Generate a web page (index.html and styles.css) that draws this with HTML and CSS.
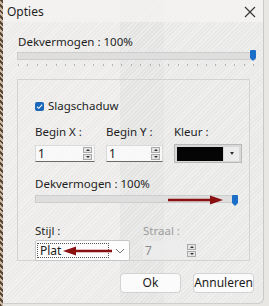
FILE: index.html
```html
<!DOCTYPE html>
<html>
<head>
<meta charset="utf-8">
<link rel="stylesheet" href="styles.css">
</head>
<body>
<div class="edge"></div>
<div class="window">
  <div class="titlebar">
    <span class="title">Opties</span>
    <svg class="close" width="12" height="12" viewBox="0 0 12 12"><path d="M1 1 L11 11 M11 1 L1 11" stroke="#333" stroke-width="1.1" fill="none"/></svg>
  </div>
  <div class="content">
    <div class="label top-label">Dekvermogen : 100%</div>
    <div class="slider wide">
      <div class="track"></div>
      <div class="thumb"></div>
    </div>
    <div class="ticks wide-ticks"></div>

    <div class="group">
      <div class="check-row">
        <span class="checkbox"><svg width="9" height="9" viewBox="0 0 9 9"><path d="M2 4.6 L3.8 6.3 L7.2 2.6" stroke="#fff" stroke-width="1.1" fill="none"/></svg></span>
        <span class="label">Slagschaduw</span>
      </div>
      <div class="fields">
        <div class="field">
          <div class="label">Begin X :</div>
          <div class="input spin-input"><span class="val">1</span><span class="spin"><span class="up"></span><span class="down"></span></span></div>
        </div>
        <div class="field">
          <div class="label">Begin Y :</div>
          <div class="input spin-input"><span class="val">1</span><span class="spin"><span class="up"></span><span class="down"></span></span></div>
        </div>
        <div class="field">
          <div class="label">Kleur :</div>
          <div class="color-pick"><span class="swatch"></span><span class="drop"><span class="tri"></span></span></div>
        </div>
      </div>
      <div class="label mid-label">Dekvermogen : 100%</div>
      <div class="slider narrow">
        <div class="track"></div>
        <svg class="arrow-right" width="56" height="10" viewBox="0 0 56 10"><path d="M0 5 H44" stroke="#8b1010" stroke-width="2.4"/><path d="M42 0.5 L55 5 L42 9.5 Z" fill="#8b1010"/></svg>
        <div class="thumb"></div>
      </div>
      <div class="ticks narrow-ticks"></div>

      <div class="fields bottom-fields">
        <div class="field">
          <div class="label">Stijl :</div>
          <div class="select">
            <span class="focus">Plat
              <svg class="arrow-left" width="50" height="10" viewBox="0 0 50 10"><path d="M11 5 H49" stroke="#8b1010" stroke-width="2.4"/><path d="M13 0.5 L0 5 L13 9.5 Z" fill="#8b1010"/></svg>
            </span>
            <svg class="chev" width="10" height="6" viewBox="0 0 10 6"><path d="M1 1 L5 5 L9 1" stroke="#777" stroke-width="1" fill="none"/></svg>
          </div>
        </div>
        <div class="field">
          <div class="label disabled">Straal :</div>
          <div class="input spin-input dis"><span class="val">7</span><span class="spin"><span class="up"></span><span class="down"></span></span></div>
        </div>
      </div>
    </div>

    <div class="buttons">
      <div class="btn ok">Ok</div>
      <div class="btn">Annuleren</div>
    </div>
  </div>
</div>
</body>
</html>
```

FILE: styles.css
```css
html, body {
  margin: 0;
  padding: 0;
}
body {
  width: 269px;
  height: 306px;
  overflow: hidden;
  display: flex;
  background: #e9e7e4;
  font-family: "Noto Sans", "Open Sans", sans-serif;
  color: #1a1a1a;
}
.edge {
  width: 3px;
  height: 306px;
  background: repeating-linear-gradient(45deg, #5a4634 0 2px, #c9b8a2 2px 4px);
  flex: none;
}
.window {
  width: 260px;
  height: 303px;
  flex: none;
  border-right: 1px solid #c9c9c9;
  border-bottom: 1px solid #cfcfcf;
  border-bottom-right-radius: 6px;
  background:
    repeating-linear-gradient(135deg, rgba(255,255,255,0.35) 0 1px, rgba(255,255,255,0) 1px 3px),
    linear-gradient(90deg, #ecebe9 0 45%, #e4e4e3 45% 62%, #e9e9e8 62% 100%);
  display: flex;
  flex-direction: column;
}
.titlebar {
  height: 22px;
  display: flex;
  align-items: center;
  justify-content: space-between;
  padding: 0 7px 0 4px;
  background: rgba(245,244,242,0.7);
}
.title {
  font-size: 12px;
  color: #1f1f1f;
}
.close {
  margin-top: 1px;
}
.content {
  padding: 0 9px 0 14px;
  display: flex;
  flex-direction: column;
}
.label {
  font-size: 11.5px;
  line-height: 14px;
  color: #1e1e1e;
  white-space: nowrap;
}
.top-label {
  margin-top: 13px;
  margin-left: 1px;
}
.slider {
  position: relative;
  height: 11px;
  display: flex;
  align-items: center;
}
.slider.wide {
  margin-top: 1px;
  width: 239px;
}
.track {
  flex: 1;
  height: 6px;
  background: #dedede;
  border: 1px solid #cdcdcd;
}
.thumb {
  position: absolute;
  right: 0;
  top: 0;
  width: 6px;
  height: 8px;
  background: #1b6fc8;
  border-radius: 1px 1px 0 0;
}
.thumb::after {
  content: "";
  position: absolute;
  left: 0;
  top: 8px;
  border-left: 3px solid transparent;
  border-right: 3px solid transparent;
  border-top: 3px solid #1b6fc8;
}
.ticks {
  height: 2px;
  margin-top: 3px;
  background: repeating-linear-gradient(90deg, #b4b4b4 0 1px, transparent 1px 9.4px);
}
.wide-ticks {
  width: 236px;
  margin-left: 1px;
}
.group {
  margin-top: 13px;
  width: 214px;
  height: 180px;
  border: 1px solid #d3d3d3;
  padding: 0 0 0 17px;
  display: flex;
  flex-direction: column;
}
.check-row {
  margin-top: 19px;
  display: flex;
  align-items: center;
  gap: 4px;
}
.checkbox {
  width: 9px;
  height: 9px;
  background: #1a67b8;
  border-radius: 2px;
  display: flex;
}
.fields {
  margin-top: 12px;
  display: flex;
  gap: 11px;
}
.field {
  display: flex;
  flex-direction: column;
  gap: 6px;
}
.input {
  height: 15px;
  background: rgba(250,250,250,0.9);
  border: 1px solid #dadada;
  border-bottom: 1px solid #6a6a6a;
  display: flex;
  align-items: center;
  justify-content: space-between;
  font-size: 12px;
}
.spin-input {
  width: 58px;
}
.fields .field:nth-child(2) .spin-input {
  width: 55px;
}
.val {
  padding-left: 2px;
}
.spin {
  width: 9px;
  margin-right: 2px;
  display: flex;
  flex-direction: column;
  gap: 1px;
}
.spin span {
  height: 6px;
  background: #e4e4e4;
  border: 1px solid #aaa;
  box-sizing: border-box;
  position: relative;
}
.spin span::after {
  content: "";
  position: absolute;
  left: 2px;
  top: 1px;
  border-left: 2px solid transparent;
  border-right: 2px solid transparent;
}
.spin .up::after { border-bottom: 2px solid #333; }
.spin .down::after { border-top: 2px solid #333; }
.color-pick {
  width: 62px;
  height: 17px;
  border: 1px solid #b9b9b9;
  background: #d8d8d8;
  display: flex;
  align-items: center;
  padding: 0 2px;
  gap: 1px;
  margin-top: -1px;
}
.swatch {
  width: 46px;
  height: 14px;
  background: #050505;
}
.drop {
  flex: 1;
  height: 14px;
  background: #ececec;
  display: flex;
  align-items: center;
  justify-content: center;
}
.tri {
  border-left: 2px solid transparent;
  border-right: 2px solid transparent;
  border-top: 3px solid #333;
}
.mid-label {
  margin-top: 14px;
}
.slider.narrow {
  margin-top: 4px;
  width: 203px;
}
.arrow-right {
  position: absolute;
  left: 133px;
  top: 0;
}
.narrow-ticks {
  width: 198px;
  margin-left: 1px;
  background: repeating-linear-gradient(90deg, #b4b4b4 0 1px, transparent 1px 11.3px);
}
.bottom-fields {
  margin-top: 18px;
  gap: 13px;
}
.bottom-fields .field {
  gap: 2px;
}
.select {
  width: 88px;
  height: 19px;
  background: #fdfdfd;
  border: 1px solid #c7c7c7;
  border-radius: 2px;
  display: flex;
  align-items: center;
  justify-content: space-between;
  padding: 0 4px 0 1px;
}
.focus {
  position: relative;
  width: 72px;
  height: 15px;
  border: 1px dotted #555;
  box-sizing: border-box;
  font-size: 12px;
  line-height: 13px;
  padding-left: 2px;
}
.arrow-left {
  position: absolute;
  left: 25px;
  top: 2px;
}
.disabled {
  color: #9d9d9d;
}
.dis {
  width: 50px;
  height: 18px;
  border: none;
  background: rgba(236,236,236,0.8);
  color: #8a8a8a;
  margin-top: 1px;
}
.buttons {
  margin-top: 12px;
  display: flex;
  justify-content: flex-end;
  gap: 12px;
}
.btn {
  width: 59px;
  height: 18px;
  background: #fbfbfb;
  border: 1px solid #d2d2d2;
  border-radius: 4px;
  font-size: 12px;
  line-height: 18px;
  text-align: center;
  color: #1a1a1a;
}
```
